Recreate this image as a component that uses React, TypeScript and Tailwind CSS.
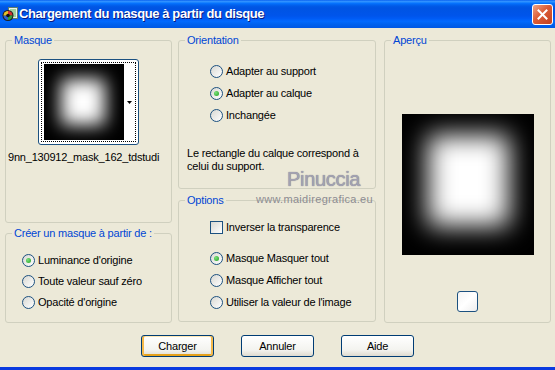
import React from "react";

function Radio({ checked = false }: { checked?: boolean }) {
  return (
    <span className="w-[13px] h-[13px] shrink-0 rounded-full border border-[#1C5180] bg-[linear-gradient(135deg,#D8D8D2,#FFFFFF)] flex items-center justify-center">
      {checked && (
        <span className="w-[5px] h-[5px] rounded-full bg-[radial-gradient(circle_at_35%_35%,#7BE07B,#21A121)]" />
      )}
    </span>
  );
}

function Check() {
  return (
    <span className="w-[13px] h-[13px] shrink-0 border border-[#1C5180] bg-[linear-gradient(135deg,#D8D8D2,#FFFFFF)]" />
  );
}

function Row({ children, checked, box }: { children: React.ReactNode; checked?: boolean; box?: boolean }) {
  return (
    <div className="h-[22px] flex items-center gap-[3px]">
      {box ? <Check /> : <Radio checked={checked} />}
      <span className="whitespace-nowrap">{children}</span>
    </div>
  );
}

function Legend({ children }: { children: React.ReactNode }) {
  return <legend className="ml-[6px] px-[2px] text-[#0046D5] leading-[13px]">{children}</legend>;
}

function Button({ children, focus }: { children: React.ReactNode; focus?: boolean }) {
  return (
    <div
      className={
        focus
          ? "w-[73px] h-[22px] rounded-[3px] border border-[#003C74] bg-[linear-gradient(180deg,#FFFFFF,#F3F3EF_70%,#DEDACF)] flex items-center justify-center [box-shadow:inset_2px_0_0_#F5B94A,inset_-2px_0_0_#F5B94A,inset_0_-2px_0_#E5A01A,inset_0_1px_0_#FFE7B3]"
          : "w-[73px] h-[22px] rounded-[3px] border border-[#003C74] bg-[linear-gradient(180deg,#FFFFFF,#F3F3EF_70%,#DEDACF)] flex items-center justify-center"
      }
    >
      {children}
    </div>
  );
}

export default function App() {
  return (
    <div className="relative w-[555px] h-[370px] overflow-hidden flex flex-col font-['Liberation_Sans',Arial,sans-serif] text-[11px] leading-[13px] tracking-[-0.2px] text-black">
      {/* Title bar */}
      <div className="h-[28px] shrink-0 flex items-center pl-[2px] bg-[linear-gradient(180deg,#0058EE_0%,#3593FF_4%,#288EFF_7%,#127DFF_10%,#036FFC_13%,#0262EE_18%,#0057E5_24%,#0054E3_30%,#0055EB_56%,#005BF5_66%,#026AFE_76%,#0062EF_86%,#0058E4_100%)]">
        <svg width="16" height="16" viewBox="0 0 16 16" className="shrink-0">
          <rect x="6.5" y="1.5" width="9" height="11" fill="#EAF3EA" stroke="#5E7E6E" />
          <rect x="8" y="3" width="6" height="8" fill="#9FD29F" />
          <circle cx="6" cy="9.5" r="5.5" fill="#1E1E1E" />
          <path d="M6 9.5 L6 5 A4.5 4.5 0 0 1 10.5 9.5 Z" fill="#D83030" />
          <path d="M6 9.5 L10.5 9.5 A4.5 4.5 0 0 1 6 14 Z" fill="#2F9E3A" />
          <path d="M6 9.5 L6 14 A4.5 4.5 0 0 1 1.5 9.5 Z" fill="#2B5FD0" />
          <path d="M6 9.5 L1.5 9.5 A4.5 4.5 0 0 1 6 5 Z" fill="#E6C229" />
          <circle cx="6" cy="9.5" r="1.8" fill="#111" />
        </svg>
        <span className="ml-[1px] text-white font-bold text-[13px] tracking-[-0.4px] leading-[16px] [text-shadow:1px_1px_0_#0A1A80]">
          Chargement du masque à partir du disque
        </span>
        <div className="ml-auto mr-[2px] w-[21px] h-[21px] rounded-[3px] border border-white bg-[linear-gradient(135deg,#EFA588,#DB5C37_45%,#C4401E)] flex items-center justify-center">
          <svg width="11" height="11" viewBox="0 0 11 11">
            <path d="M1.5 1.5 L9.5 9.5 M9.5 1.5 L1.5 9.5" stroke="#FFFFFF" strokeWidth="2" strokeLinecap="square" />
          </svg>
        </div>
      </div>

      {/* Body */}
      <div className="flex-1 bg-[#ECE9D8] border-b-[3px] border-[#0A3AE0] flex flex-col pt-[6px]">
        <div className="flex ml-[5px]">
          {/* Column 1 */}
          <div className="w-[167px] flex flex-col">
            <fieldset className="h-[189px] min-w-0 border border-[#D0D0BF] rounded-[3px]">
              <Legend>Masque</Legend>
              <div className="flex flex-col items-center">
                <div className="mt-[12px] w-[101px] h-[86px] rounded-[3px] border border-[#1C5180] bg-white p-[2px]">
                  <div className="h-full border border-dotted border-black flex px-[2px] py-[1px]">
                    <div className="w-[80px] bg-black overflow-hidden pl-[17px] pr-[19px] pt-[15px] pb-[15px]">
                      <div className="w-full h-full bg-white blur-[9px]" />
                    </div>
                    <div className="flex-1 flex items-center justify-end pr-[1px]">
                      <svg width="5" height="3" viewBox="0 0 5 3">
                        <path d="M0 0 H5 L2.5 3 Z" fill="#000" />
                      </svg>
                    </div>
                  </div>
                </div>
                <div className="mt-[6px] self-stretch overflow-hidden whitespace-nowrap pl-[2px]">
                  9nn_130912_mask_162_tdstudi
                </div>
              </div>
            </fieldset>
            <fieldset className="mt-[4px] h-[96px] min-w-0 border border-[#D0D0BF] rounded-[3px]">
              <Legend>Créer un masque à partir de :</Legend>
              <div className="pl-[16px] pt-[10px] flex flex-col">
                <div className="h-[21px] flex items-center gap-[3px]"><Radio checked /><span>Luminance d'origine</span></div>
                <div className="h-[21px] flex items-center gap-[3px]"><Radio /><span>Toute valeur sauf zéro</span></div>
                <div className="h-[21px] flex items-center gap-[3px]"><Radio /><span>Opacité d'origine</span></div>
              </div>
            </fieldset>
          </div>

          {/* Column 2 */}
          <div className="ml-[6px] w-[198px] flex flex-col">
            <fieldset className="h-[155px] min-w-0 border border-[#D0D0BF] rounded-[3px]">
              <Legend>Orientation</Legend>
              <div className="pl-[31px] pt-[13px] flex flex-col">
                <Row>Adapter au support</Row>
                <Row checked>Adapter au calque</Row>
                <Row>Inchangée</Row>
              </div>
              <div className="pl-[8px] mt-[21px]">
                Le rectangle du calque correspond à
                <br />
                celui du support.
              </div>
            </fieldset>
            <fieldset className="mt-[5px] h-[128px] min-w-0 border border-[#D0D0BF] rounded-[3px]">
              <Legend>Options</Legend>
              <div className="pl-[31px] pt-[9px] flex flex-col">
                <Row box>Inverser la transparence</Row>
                <div className="mt-[9px] flex flex-col">
                  <Row checked>Masque Masquer tout</Row>
                  <Row>Masque Afficher tout</Row>
                  <Row>Utiliser la valeur de l'image</Row>
                </div>
              </div>
            </fieldset>
          </div>

          {/* Column 3 */}
          <div className="ml-[8px] w-[167px] flex flex-col">
            <fieldset className="h-[289px] min-w-0 border border-[#D0D0BF] rounded-[3px]">
              <Legend>Aperçu</Legend>
              <div className="flex flex-col items-center pt-[67px]">
                <div className="w-[132px] h-[141px] bg-black overflow-hidden pl-[26px] pr-[25px] pt-[21px] pb-[29px]">
                  <div className="w-full h-full bg-white blur-[13px]" />
                </div>
                <div className="mt-[36px] w-[21px] h-[21px] rounded-[3px] border border-[#1C5180] bg-[linear-gradient(135deg,#F4F4F4,#FFFFFF_50%,#EDEDED)]" />
              </div>
            </fieldset>
          </div>
        </div>

        {/* Buttons */}
        <div className="mt-[12px] flex justify-center gap-[27px]">
          <Button focus>Charger</Button>
          <Button>Annuler</Button>
          <Button>Aide</Button>
        </div>
      </div>

      {/* Watermark */}
      <div className="absolute left-[287px] top-[168px] text-[20px] leading-[22px] tracking-[-0.3px] text-[#A3A2B2] [text-shadow:0_0_1px_#6E6E7E]">
        Pinuccia
      </div>
      <div className="absolute left-[256px] top-[193px] text-[11px] leading-[12px] tracking-[0.3px] text-[#8C8C92]">
        www.maidiregrafica.eu
      </div>
    </div>
  );
}
